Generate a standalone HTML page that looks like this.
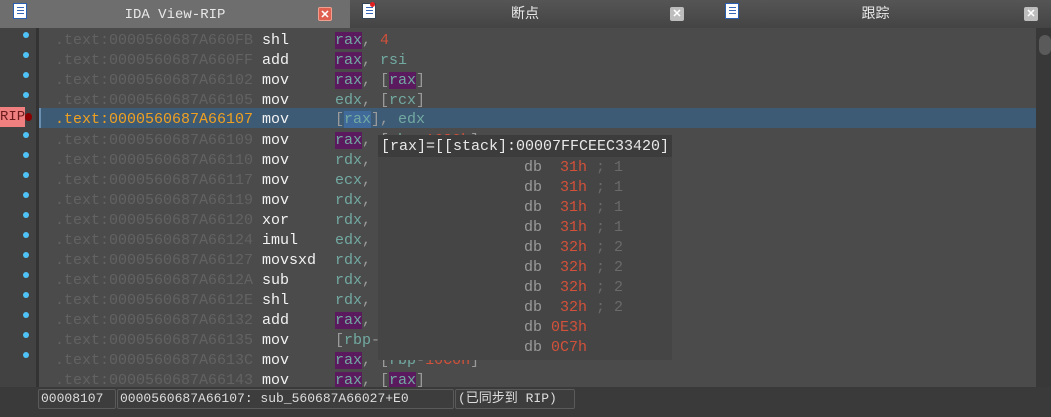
<!DOCTYPE html>
<html><head><meta charset="utf-8"><style>
*{margin:0;padding:0;box-sizing:border-box}
body{width:1051px;height:417px;background:#3a3a3a;overflow:hidden;position:relative;font-family:"Liberation Mono","Noto Sans CJK SC",monospace}
.tab{position:absolute;top:0;height:28px;color:#e8e8e8;font-size:14px;line-height:30px}
.t1{left:0;width:350px;background:#6e6e6e}
.t2{left:350px;width:350px;background:linear-gradient(#555,#444)}
.t3{left:700px;width:351px;background:linear-gradient(#555,#444)}
.tab .ttl{position:absolute;left:0;right:0;text-align:center}
.ic{position:absolute;top:3px;width:14px;height:16px;background:#fff;border:1px solid #2a5fb0}
.ic:before{content:"";position:absolute;left:3px;top:3px;width:7px;height:8px;background:repeating-linear-gradient(#3566b8 0 1px,transparent 1px 3px)}
.x{position:absolute;top:7px;width:14px;height:14px;border-radius:2px;background:#bdbdbd;color:#fff;font-size:11px;line-height:14px;text-align:center;font-family:"Liberation Sans",sans-serif;font-weight:bold}
.gut{position:absolute;left:0;top:28px;width:36px;height:359px;background:#424242}
.sep{position:absolute;left:36px;top:28px;width:3px;height:359px;background:#333}
.code{position:absolute;left:39px;top:28px;width:997px;height:359px;background:#4b4b4b;overflow:hidden}
.sb{position:absolute;left:1036px;top:28px;width:15px;height:359px;background:#383838}
.thumb{position:absolute;left:1039px;top:35px;width:12px;height:20px;border-radius:6px;background:#5a5a5a}
.row{position:absolute;left:0;height:20px;line-height:23px;font-size:15px;white-space:pre}
.a{position:absolute;left:16px;color:#626262}
.m{position:absolute;left:223px;color:#f2f2f2}
.o{position:absolute;left:296px;color:#9a9a9a}
.r{color:#72aaa2}.n{color:#d2513a}
.p{background:#5c1a5e}
.hl{background:#3e5b76;width:997px;border-left:2px solid #6a8fb0}
.hl .a{color:#f0a020}
.dot{position:absolute;left:23px;width:6px;height:6px;border-radius:3px;background:#4fc3f7}
.tip{position:absolute;left:378px;top:135px;width:294px;height:225px;background:#454545;font-size:15px}
.tiph{position:absolute;left:0;top:0;width:294px;height:22px;line-height:23px;background:#3c3c3c;color:#e8e8e8;padding-left:3px;white-space:pre}
.tl{position:absolute;left:146px;height:20px;line-height:23px;color:#9a9a9a;white-space:pre}
.tl .v{color:#d2513a}.tl .c{color:#6a6a6a}
.status{position:absolute;top:389px;height:20px;border:1px solid #5a5a5a;border-radius:2px;background:#3d3d3d;color:#ddd;font-size:13px;line-height:18px;padding:0 2px;white-space:pre}
</style></head><body>
<div class="tab t1"><div class="ic" style="left:13px"></div><div class="ttl">IDA View-RIP</div><div class="x" style="left:318px;background:#e06050;border:1px solid #f0a090">✕</div></div>
<div class="tab t2"><div class="ic" style="left:12px;border-color:#345"></div><div style="position:absolute;left:20px;top:2px;width:5px;height:5px;border-radius:3px;background:#e02020"></div><div class="ttl">断点</div><div class="x" style="left:320px">✕</div></div>
<div class="tab t3"><div class="ic" style="left:25px;top:3px"></div><div class="ttl">跟踪</div><div class="x" style="left:324px">✕</div></div>
<div class="gut"></div><div class="sep"></div>
<div class="code">
<div class="row" style="top:1px"><span class="a">.text:0000560687A660FB</span><span class="m">shl</span><span class="o"><span class="r p">rax</span>, <span class="n">4</span></span></div>
<div class="row" style="top:21px"><span class="a">.text:0000560687A660FF</span><span class="m">add</span><span class="o"><span class="r p">rax</span>, <span class="r">rsi</span></span></div>
<div class="row" style="top:41px"><span class="a">.text:0000560687A66102</span><span class="m">mov</span><span class="o"><span class="r p">rax</span>, [<span class="r p">rax</span>]</span></div>
<div class="row" style="top:61px"><span class="a">.text:0000560687A66105</span><span class="m">mov</span><span class="o"><span class="r">edx</span>, [<span class="r">rcx</span>]</span></div>
<div class="row hl" style="top:80px"><span class="a" style="left:14px">.text:0000560687A66107</span><span class="m" style="left:221px">mov</span><span class="o" style="left:294px">[<span class="r" style="background:#3f6a9a">rax</span>], <span class="r">edx</span></span></div>
<div class="row" style="top:101px"><span class="a">.text:0000560687A66109</span><span class="m">mov</span><span class="o"><span class="r p">rax</span>, [<span class="r">rbp</span>-<span class="n">1680h</span>]</span></div>
<div class="row" style="top:121px"><span class="a">.text:0000560687A66110</span><span class="m">mov</span><span class="o"><span class="r">rdx</span>,</span></div>
<div class="row" style="top:141px"><span class="a">.text:0000560687A66117</span><span class="m">mov</span><span class="o"><span class="r">ecx</span>,</span></div>
<div class="row" style="top:161px"><span class="a">.text:0000560687A66119</span><span class="m">mov</span><span class="o"><span class="r">rdx</span>,</span></div>
<div class="row" style="top:181px"><span class="a">.text:0000560687A66120</span><span class="m">xor</span><span class="o"><span class="r">rdx</span>,</span></div>
<div class="row" style="top:201px"><span class="a">.text:0000560687A66124</span><span class="m">imul</span><span class="o"><span class="r">edx</span>,</span></div>
<div class="row" style="top:221px"><span class="a">.text:0000560687A66127</span><span class="m">movsxd</span><span class="o"><span class="r">rdx</span>,</span></div>
<div class="row" style="top:241px"><span class="a">.text:0000560687A6612A</span><span class="m">sub</span><span class="o"><span class="r">rdx</span>,</span></div>
<div class="row" style="top:261px"><span class="a">.text:0000560687A6612E</span><span class="m">shl</span><span class="o"><span class="r">rdx</span>,</span></div>
<div class="row" style="top:281px"><span class="a">.text:0000560687A66132</span><span class="m">add</span><span class="o"><span class="r p">rax</span>,</span></div>
<div class="row" style="top:301px"><span class="a">.text:0000560687A66135</span><span class="m">mov</span><span class="o">[<span class="r">rbp</span>-<span class="n">10C0h</span>]</span></div>
<div class="row" style="top:321px"><span class="a">.text:0000560687A6613C</span><span class="m">mov</span><span class="o"><span class="r p">rax</span>, [<span class="r">rbp</span>-<span class="n">10C0h</span>]</span></div>
<div class="row" style="top:341px"><span class="a">.text:0000560687A66143</span><span class="m">mov</span><span class="o"><span class="r p">rax</span>, [<span class="r p">rax</span>]</span></div>
</div>
<div class="dot" style="top:32px"></div><div class="dot" style="top:52px"></div><div class="dot" style="top:72px"></div><div class="dot" style="top:92px"></div>
<div style="position:absolute;left:0;top:107px;width:25px;height:20px;background:#f08080;color:#6a1a1a;font-size:14px;line-height:20px;text-align:right">RIP</div>
<div style="position:absolute;left:25px;top:113px;width:7px;height:8px;border-radius:4px;background:#8a0000"></div>
<div class="dot" style="top:132px"></div><div class="dot" style="top:152px"></div><div class="dot" style="top:172px"></div><div class="dot" style="top:192px"></div><div class="dot" style="top:212px"></div><div class="dot" style="top:232px"></div><div class="dot" style="top:252px"></div><div class="dot" style="top:272px"></div><div class="dot" style="top:292px"></div><div class="dot" style="top:312px"></div><div class="dot" style="top:332px"></div><div class="dot" style="top:352px"></div>
<div class="sb"></div><div class="thumb"></div>
<div class="tip"><div class="tiph">[rax]=[[stack]:00007FFCEEC33420]</div><div class="tl" style="top:21px">db  <span class="v">31h</span> <span class="c">; 1</span></div><div class="tl" style="top:41px">db  <span class="v">31h</span> <span class="c">; 1</span></div><div class="tl" style="top:61px">db  <span class="v">31h</span> <span class="c">; 1</span></div><div class="tl" style="top:81px">db  <span class="v">31h</span> <span class="c">; 1</span></div><div class="tl" style="top:101px">db  <span class="v">32h</span> <span class="c">; 2</span></div><div class="tl" style="top:121px">db  <span class="v">32h</span> <span class="c">; 2</span></div><div class="tl" style="top:141px">db  <span class="v">32h</span> <span class="c">; 2</span></div><div class="tl" style="top:161px">db  <span class="v">32h</span> <span class="c">; 2</span></div><div class="tl" style="top:181px">db <span class="v">0E3h</span></div><div class="tl" style="top:201px">db <span class="v">0C7h</span></div></div>
<div class="status" style="left:38px;width:78px">00008107</div>
<div class="status" style="left:117px;width:337px">0000560687A66107: sub_560687A66027+E0</div>
<div class="status" style="left:455px;width:120px">(已同步到 RIP)</div>
</body></html>
